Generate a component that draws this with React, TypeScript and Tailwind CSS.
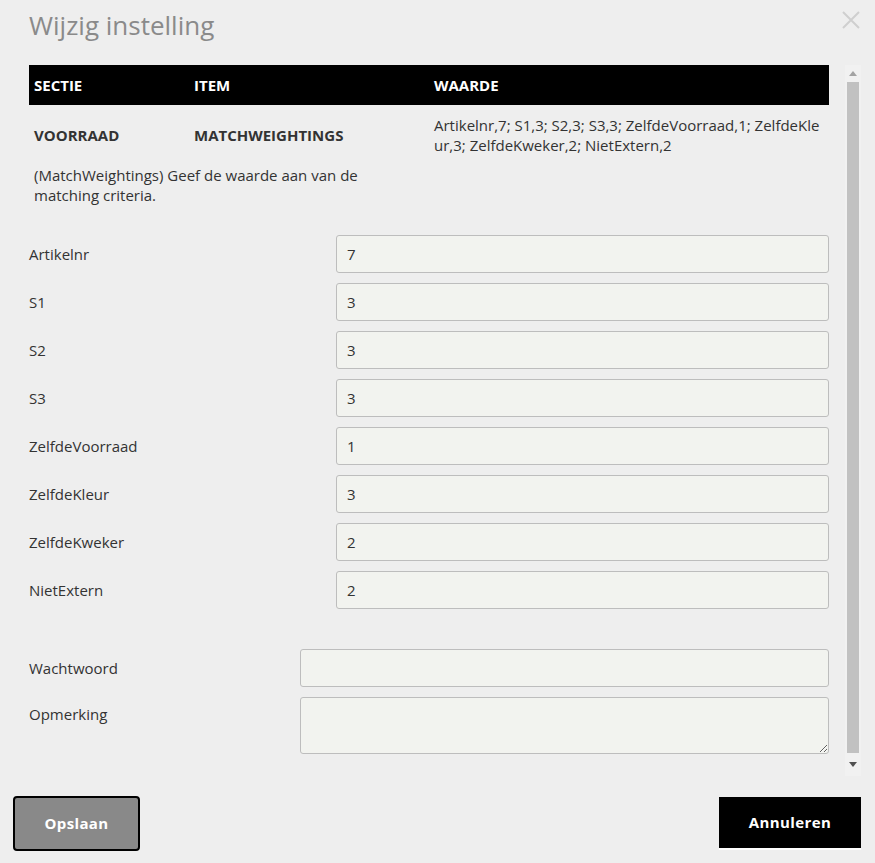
const font = { fontFamily: '"Open Sans", "Noto Sans", sans-serif' };

const fields: [string, string][] = [
  ['Artikelnr', '7'],
  ['S1', '3'],
  ['S2', '3'],
  ['S3', '3'],
  ['ZelfdeVoorraad', '1'],
  ['ZelfdeKleur', '3'],
  ['ZelfdeKweker', '2'],
  ['NietExtern', '2'],
];

function ScrollBar() {
  return (
    <div className="flex w-[16px] flex-col bg-[#f1f1f1]">
      <div className="flex h-[17px] items-center justify-center">
        <svg width="8" height="5" viewBox="0 0 8 5">
          <path d="M0 5 L4 0 L8 5 Z" fill="#a3a3a3" />
        </svg>
      </div>
      <div className="mx-[2px] flex-1 bg-[#c1c1c1]" />
      <div className="flex h-[23px] items-center justify-center">
        <svg width="8" height="5" viewBox="0 0 8 5">
          <path d="M0 0 L8 0 L4 5 Z" fill="#505050" />
        </svg>
      </div>
    </div>
  );
}

export default function App() {
  return (
    <div className="flex h-[863px] w-[875px] flex-col bg-[#eeeeee] text-[15px] text-[#333]" style={font}>
      <div className="flex h-[65px] items-start justify-between pl-[29px] pr-[14px]">
        <h1 className="mt-[6px] text-[26px] leading-[38px] text-[#8a8a8a]">Wijzig instelling</h1>
        <svg className="mt-[10px]" width="20" height="20" viewBox="0 0 20 20">
          <path d="M2 2 L18 18 M18 2 L2 18" stroke="#cfcfcf" strokeWidth="2" />
        </svg>
      </div>

      <div className="flex h-[711px] gap-[16px] pl-[29px]">
        <div className="w-[800px]">
          <div className="grid h-[40px] grid-cols-[160px_240px_400px] items-center bg-black font-bold text-white">
            <div className="px-[5px]">SECTIE</div>
            <div className="px-[5px]">ITEM</div>
            <div className="px-[5px]">WAARDE</div>
          </div>
          <div className="grid h-[60px] grid-cols-[160px_240px_400px] items-center">
            <div className="px-[5px] font-bold">VOORRAAD</div>
            <div className="px-[5px] font-bold">MATCHWEIGHTINGS</div>
            <div className="break-all px-[5px] leading-[20px]">
              Artikelnr,7; S1,3; S2,3; S3,3; ZelfdeVoorraad,1; ZelfdeKleur,3; ZelfdeKweker,2; NietExtern,2
            </div>
          </div>
          <p className="w-[400px] px-[5px] leading-[20px]">
            (MatchWeightings) Geef de waarde aan van de matching criteria.
          </p>

          <div className="mt-[30px] flex flex-col gap-[10px]">
            {fields.map(([label, value]) => (
              <div key={label} className="flex items-center">
                <label className="w-[307px]">{label}</label>
                <input
                  defaultValue={value}
                  className="h-[38px] flex-1 rounded-[3px] border border-[#bdbdbd] bg-[#f2f3ef] px-[10px] text-[15px] text-[#333] outline-none"
                  style={font}
                />
              </div>
            ))}
          </div>

          <div className="mt-[40px] flex flex-col gap-[10px]">
            <div className="flex items-center">
              <label className="w-[271px]">Wachtwoord</label>
              <input
                type="password"
                className="h-[38px] flex-1 rounded-[3px] border border-[#bdbdbd] bg-[#f2f3ef] px-[10px] outline-none"
              />
            </div>
            <div className="flex items-start">
              <label className="w-[271px] pt-[6px]">Opmerking</label>
              <textarea className="h-[57px] flex-1 rounded-[3px] border border-[#bdbdbd] bg-[#f2f3ef] px-[10px] outline-none" />
            </div>
          </div>
        </div>
        <ScrollBar />
      </div>

      <div className="mt-[20px] flex items-start justify-between pl-[13px] pr-[14px]">
        <button className="h-[55px] w-[127px] rounded-[4px] border-2 border-black bg-[#898989] text-[15px] font-bold tracking-wide text-white">
          Opslaan
        </button>
        <button className="mt-[1px] h-[53px] w-[142px] border-b-2 border-white bg-black text-[15px] font-bold tracking-wide text-white">
          Annuleren
        </button>
      </div>
    </div>
  );
}
